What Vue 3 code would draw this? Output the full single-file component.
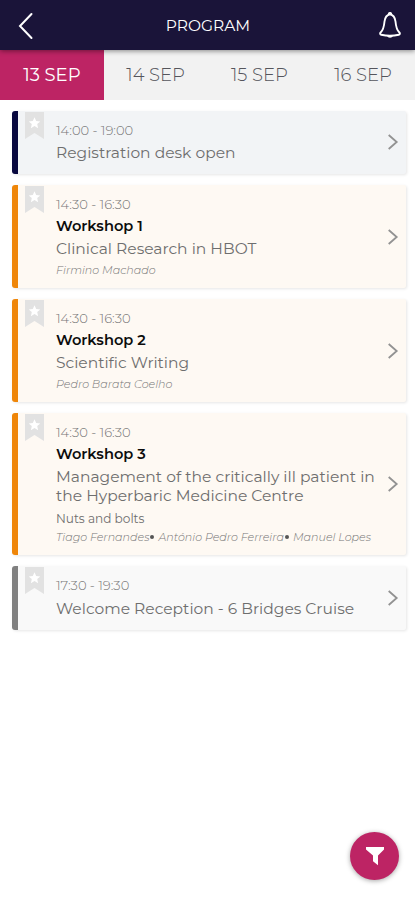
<template>
  <div class="app">
    <header class="header">
      <button class="icon-btn" aria-label="Back">
        <svg width="16" height="28" viewBox="0 0 16 28" fill="none" stroke="#fff" stroke-width="2" stroke-linecap="round">
          <path d="M13.500 2 2 14 13.500 26" />
        </svg>
      </button>
      <h1 class="header-title">PROGRAM</h1>
      <button class="icon-btn" aria-label="Notifications">
        <svg width="24" height="28" viewBox="0 0 24 28" fill="none" stroke="#fff" stroke-width="1.9" stroke-linejoin="round">
          <path d="M12 2.200C8.800 2.800 7 5.500 6.500 9.500c-.5 5.500-1 8.300-3.700 10.700-1 .9-1 2.300.4 2.600 5.600 1.200 12 1.200 17.600 0 1.400-.3 1.400-1.700.4-2.600-2.700-2.400-3.200-5.200-3.700-10.700C17 5.500 15.200 2.800 12 2.200Z" />
          <path d="M10.700 2.200a1.300 1.300 0 0 1 2.600 0" />
          <path d="M9 23.500c.6 3 5.400 3 6 0Z" fill="#fff" stroke="none" />
        </svg>
      </button>
    </header>

    <nav class="tabs">
      <button
        v-for="day in days"
        :key="day"
        :class="['tab', { active: day === currentDay }]"
        @click="currentDay = day"
      >{{ day }}</button>
    </nav>

    <main class="list">
      <article v-for="item in sessions" :key="item.id" :class="['card', item.type]">
        <svg class="bookmark" width="19" height="27" viewBox="0 0 19 27">
          <path d="M0 0h19v27l-9.500-6L0 27Z" fill="#e2e2e2" />
          <path d="m9.500 5.200 1.700 3.800 4.100.4-3.100 2.700.9 4.100-3.600-2.100-3.600 2.100.9-4.100-3.100-2.700 4.100-.4Z" fill="#fff" />
        </svg>
        <div class="card-body">
          <div class="time">{{ item.time }}</div>
          <div v-if="item.name" class="name">{{ item.name }}</div>
          <div class="title">{{ item.title }}</div>
          <div v-if="item.note" class="note">{{ item.note }}</div>
          <div v-if="item.speakers" class="speakers">
            <template v-for="(speaker, i) in item.speakers" :key="speaker">
              <span v-if="i" class="dot"></span>{{ speaker }}
            </template>
          </div>
        </div>
        <svg class="chevron" width="12" height="18" viewBox="0 0 12 18" fill="none" stroke="#929292" stroke-width="1.8">
          <path d="m1.700 2 8 7-8 7" />
        </svg>
      </article>
    </main>

    <button class="fab" aria-label="Filter">
      <svg width="20" height="20" viewBox="0 0 20 20" fill="#fff">
        <path d="M1 1h18v2.600l-6 5.800v9.800l-5-4V9.400L1 3.600Z" />
      </svg>
    </button>
  </div>
</template>

<script setup>
import { ref } from 'vue'

const days = ['13 SEP', '14 SEP', '15 SEP', '16 SEP']
const currentDay = ref('13 SEP')

const sessions = [
  { id: 1, type: 'info', time: '14:00 - 19:00', title: 'Registration desk open' },
  {
    id: 2,
    type: 'workshop',
    time: '14:30 - 16:30',
    name: 'Workshop 1',
    title: 'Clinical Research in HBOT',
    speakers: ['Firmino Machado']
  },
  {
    id: 3,
    type: 'workshop',
    time: '14:30 - 16:30',
    name: 'Workshop 2',
    title: 'Scientific Writing',
    speakers: ['Pedro Barata Coelho']
  },
  {
    id: 4,
    type: 'workshop',
    time: '14:30 - 16:30',
    name: 'Workshop 3',
    title: 'Management of the critically ill patient in the Hyperbaric Medicine Centre',
    note: 'Nuts and bolts',
    speakers: ['Tiago Fernandes', 'António Pedro Ferreira', 'Manuel Lopes']
  },
  { id: 5, type: 'social', time: '17:30 - 19:30', title: 'Welcome Reception - 6 Bridges Cruise' }
]
</script>

<style>
body {
  margin: 0;
  background: #fff;
}
</style>

<style scoped>
.app {
  height: 900px;
  overflow: hidden;
  background: #fff;
  font-family: Montserrat, Inter, sans-serif;
  color: #777;
}

button {
  padding: 0;
  border: none;
  background: none;
  font-family: inherit;
  cursor: pointer;
}

/* header */
.header {
  position: relative;
  z-index: 1;
  display: flex;
  align-items: center;
  justify-content: space-between;
  height: 50px;
  padding: 2px 13px 0 18px;
  box-sizing: border-box;
  background: #1a1439;
  box-shadow: 0 1px 5px rgba(0, 0, 0, 0.45);
}

.icon-btn {
  display: flex;
}

.header-title {
  margin: 0 0 2px 4px;
  font-size: 15.5px;
  font-weight: 400;
  color: #fff;
}

/* days */
.tabs {
  display: grid;
  grid-template-columns: repeat(4, 1fr);
  height: 50px;
  background: #f2f2f2;
}

.tab {
  font-size: 18px;
  font-weight: 300;
  color: #55555c;
}

.tab.active {
  background: #bd2464;
  color: #fff;
  font-weight: 400;
}

/* sessions */
.list {
  display: flex;
  flex-direction: column;
  gap: 11px;
  padding: 10.5px 9px 0 12px;
}

.card {
  display: flex;
  align-items: center;
  border-left: 6px solid;
  border-radius: 3px 2px 2px 3px;
  box-shadow: 1px 1px 3px rgba(0, 0, 0, 0.1);
}

.card.info {
  border-color: #08083f;
  background: #f2f4f6;
}

.card.workshop {
  border-color: #ef8609;
  background: #fef9f3;
}

.card.social {
  border-color: #808080;
  background: #f9f9f9;
}

.bookmark {
  flex: none;
  align-self: flex-start;
  margin: 1px 0 0 7px;
}

.card-body {
  flex: 1;
  min-width: 0;
  padding: 10px 0 9px 12px;
}

.info .card-body,
.social .card-body {
  padding-bottom: 12.5px;
}

.time {
  padding-bottom: 1px;
  font-size: 13.1px;
  font-weight: 300;
  line-height: 19px;
}

.name {
  padding-top: 1px;
  font-size: 14.6px;
  font-weight: 600;
  line-height: 21px;
  color: #0c0c0c;
}

.title {
  margin-top: 2px;
  font-size: 15.5px;
  font-weight: 400;
  line-height: 19px;
  color: #6e6e6e;
}

.social .title {
  padding-top: 0.5px;
}

.note {
  margin-top: 5px;
  font-size: 12.1px;
  line-height: 17px;
  font-weight: 400;
  color: #6e6e6e;
}

.speakers {
  margin-top: 4px;
  font-size: 11.1px;
  font-style: italic;
  font-weight: 300;
  line-height: 17px;
  white-space: nowrap;
}

.note + .speakers {
  margin-top: 2px;
}

.dot {
  display: inline-block;
  width: 4px;
  height: 4px;
  margin: 0 4px 0 1px;
  border-radius: 50%;
  background: #555;
  vertical-align: 2px;
}

.chevron {
  flex: none;
  margin: 0 7px 0 0;
}

.fab {
  position: fixed;
  right: 16px;
  bottom: 20px;
  display: flex;
  align-items: center;
  justify-content: center;
  width: 49px;
  height: 48px;
  border-radius: 50%;
  background: #bd2464;
  box-shadow: 0 1px 5px rgba(0, 0, 0, 0.35);
}
</style>
